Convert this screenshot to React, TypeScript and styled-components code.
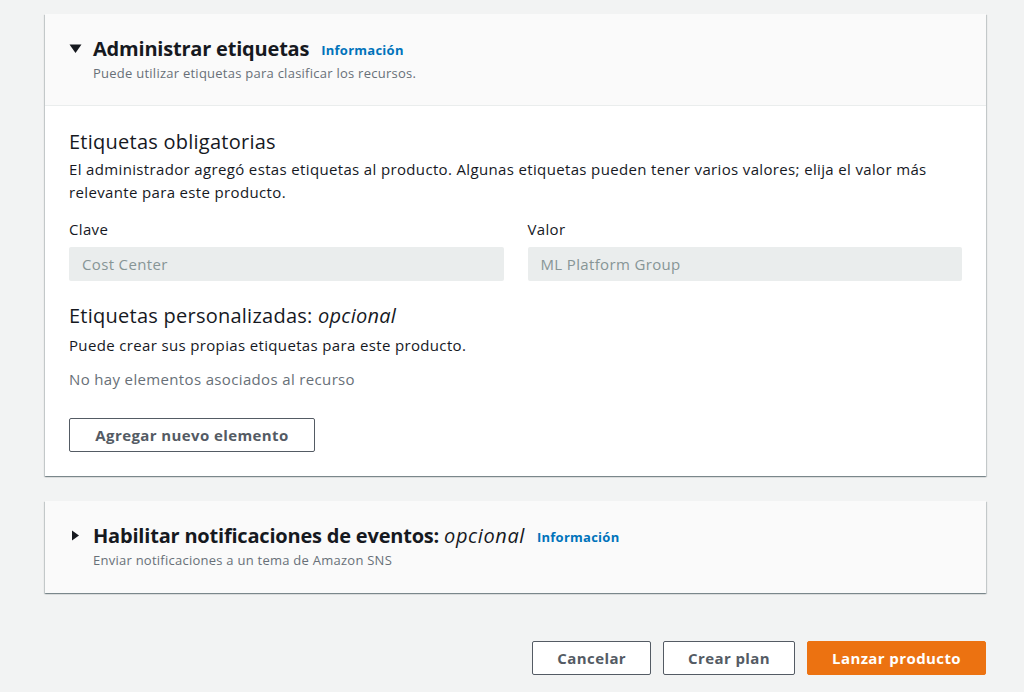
import React from 'react';
import styled, { createGlobalStyle } from 'styled-components';

const GlobalStyle = createGlobalStyle`
  html, body {
    margin: 0;
    padding: 0;
    background: #f2f3f3;
    font-family: "Open Sans", "Noto Sans", sans-serif;
    color: #16191f;
  }
`;

const Page = styled.div`
  padding: 14px 38px 18px 45px;
  display: flex;
  flex-direction: column;
  gap: 25px;
`;

const Panel = styled.section`
  background: #fff;
  box-shadow: 0 1px 1px 0 rgba(0, 28, 36, 0.3), 1px 1px 1px 0 rgba(0, 28, 36, 0.15),
    -1px 1px 1px 0 rgba(0, 28, 36, 0.15);
`;

const Header = styled.div<{ collapsed?: boolean }>`
  background: #fafafa;
  padding: 21px 24px ${p => (p.collapsed ? '24px' : '23px')};
  border-bottom: ${p => (p.collapsed ? 'none' : '1px solid #eaeded')};
`;

const TitleRow = styled.div`
  display: flex;
  align-items: center;
`;

const Caret = styled.svg`
  width: 13px;
  height: 13px;
  margin-right: 11px;
  flex-shrink: 0;
`;

const PanelTitle = styled.h2`
  margin: 0;
  font-size: 20px;
  font-weight: 700;
  line-height: 27px;
  letter-spacing: -0.2px;

  em {
    font-weight: 400;
    letter-spacing: 0.6px;
  }
`;

const InfoLink = styled.a`
  margin-left: 12px;
  font-size: 13px;
  font-weight: 700;
  letter-spacing: 0.25px;
  color: #0073bb;
  text-decoration: none;
  padding-top: 3px;
`;

const HeaderDesc = styled.p`
  margin: 2px 0 0 24px;
  font-size: 13px;
  letter-spacing: 0.25px;
  line-height: 18px;
  color: #687078;
`;

const Body = styled.div`
  padding: 22px 24px 24px;
`;

const SubTitle = styled.h3`
  margin: 0;
  font-size: 20px;
  font-weight: 400;
  line-height: 28px;
  letter-spacing: 0.25px;
`;

const Text = styled.p<{ muted?: boolean }>`
  margin: 2px 0 0;
  font-size: 15px;
  letter-spacing: 0.35px;
  line-height: 23px;
  color: ${p => (p.muted ? '#687078' : '#16191f')};
`;

const FieldGrid = styled.div`
  display: grid;
  grid-template-columns: 1fr 1fr;
  gap: 24px;
  margin: 14px 0 21px;
`;

const Field = styled.div`
  display: flex;
  flex-direction: column;
`;

const Label = styled.label`
  font-size: 15px;
  letter-spacing: 0.35px;
  line-height: 22px;
  margin-bottom: 7px;
`;

const ReadOnlyInput = styled.div`
  height: 34px;
  box-sizing: border-box;
  background: #eaeded;
  border-radius: 2px;
  padding: 0 13px;
  display: flex;
  align-items: center;
  font-size: 15px;
  letter-spacing: 0.35px;
  color: #879596;
`;

const CustomDesc = styled(Text)`
  margin-top: 4px;
`;

const EmptyText = styled(Text)`
  margin-top: 11px;
`;

const Button = styled.button<{ primary?: boolean }>`
  height: 34px;
  box-sizing: border-box;
  padding: 0 24px;
  border-radius: 2px;
  font-family: inherit;
  font-size: 15px;
  font-weight: 700;
  letter-spacing: 0.4px;
  cursor: pointer;
  background: ${p => (p.primary ? '#ec7211' : '#fff')};
  color: ${p => (p.primary ? '#fff' : '#545b64')};
  border: 1px solid ${p => (p.primary ? '#ec7211' : '#545b64')};
`;

const AddButton = styled(Button)`
  display: block;
  margin-top: 27px;
  width: 246px;
`;

const Footer = styled.div`
  display: flex;
  justify-content: flex-end;
  gap: 12px;
  margin-top: 23px;
`;

const CaretDown = () => (
  <Caret viewBox="0 0 13 13">
    <polygon points="0.5,2.5 12.5,2.5 6.5,11" fill="#16191f" />
  </Caret>
);

const CaretRight = () => (
  <Caret viewBox="0 0 13 13">
    <polygon points="3,1.5 10,6.5 3,11.5" fill="#16191f" />
  </Caret>
);

export default function App() {
  return (
    <>
      <GlobalStyle />
      <Page>
        <Panel>
          <Header>
            <TitleRow>
              <CaretDown />
              <PanelTitle>Administrar etiquetas</PanelTitle>
              <InfoLink href="#">Información</InfoLink>
            </TitleRow>
            <HeaderDesc>Puede utilizar etiquetas para clasificar los recursos.</HeaderDesc>
          </Header>
          <Body>
            <SubTitle>Etiquetas obligatorias</SubTitle>
            <Text>
              El administrador agregó estas etiquetas al producto. Algunas etiquetas pueden tener varios
              valores; elija el valor más relevante para este producto.
            </Text>
            <FieldGrid>
              <Field>
                <Label>Clave</Label>
                <ReadOnlyInput>Cost Center</ReadOnlyInput>
              </Field>
              <Field>
                <Label>Valor</Label>
                <ReadOnlyInput>ML Platform Group</ReadOnlyInput>
              </Field>
            </FieldGrid>
            <SubTitle>
              Etiquetas personalizadas: <em>opcional</em>
            </SubTitle>
            <CustomDesc>Puede crear sus propias etiquetas para este producto.</CustomDesc>
            <EmptyText muted>No hay elementos asociados al recurso</EmptyText>
            <AddButton>Agregar nuevo elemento</AddButton>
          </Body>
        </Panel>

        <Panel>
          <Header collapsed>
            <TitleRow>
              <CaretRight />
              <PanelTitle>
                Habilitar notificaciones de eventos: <em>opcional</em>
              </PanelTitle>
              <InfoLink href="#">Información</InfoLink>
            </TitleRow>
            <HeaderDesc>Enviar notificaciones a un tema de Amazon SNS</HeaderDesc>
          </Header>
        </Panel>

        <Footer>
          <Button>Cancelar</Button>
          <Button>Crear plan</Button>
          <Button primary>Lanzar producto</Button>
        </Footer>
      </Page>
    </>
  );
}
